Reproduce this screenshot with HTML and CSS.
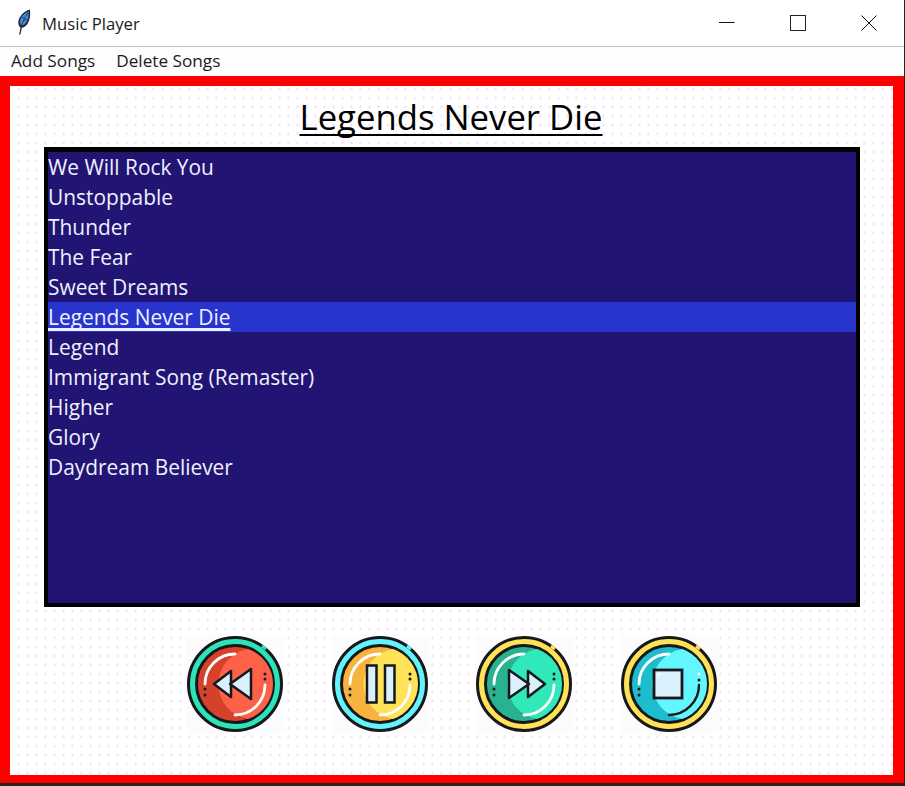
FILE: index.html
```html
<!DOCTYPE html>
<html lang="en">
<head>
    <meta charset="UTF-8">
    <title>Music Player</title>
    <link rel="stylesheet" href="styles.css">
</head>
<body>
    <div class="window">
        <div class="titlebar">
            <svg class="feather" width="16" height="26" viewBox="0 0 16 26">
                <path d="M3 25.500 C4 22 4.300 20 4.500 18.500 C2 17 1.500 12 4 8 C6 4.500 10 1.500 14 0.500 C14.500 6 14 11 11.500 15 C9.500 17.500 7.500 18.500 5.800 18.800 C5.500 21 5 23.500 4.300 25.500 Z" fill="#1a2740"/>
                <path d="M5 16.500 C3.500 14 3.800 10.500 5.800 7.500 C7.500 5.200 10 3.500 12.700 2.500 C12.800 6.500 12.200 10.500 10 13.800 C8.500 15.500 6.800 16.500 5 16.500 Z" fill="#4a90e2"/>
                <path d="M5 18 C6.500 13 8.500 8.500 12 4M7 12L11 10M6 9L8 8.500" stroke="#1a2740" stroke-width="0.800" fill="none"/>
            </svg>
            <span class="app-title">Music Player</span>
            <div class="win-buttons">
                <svg width="16" height="16" viewBox="0 0 16 16"><path d="M0 7.500H15.500" stroke="#111" fill="none"/></svg>
                <svg width="16" height="16" viewBox="0 0 16 16"><rect x="0.500" y="0.500" width="15" height="15" stroke="#222" fill="none"/></svg>
                <svg width="16" height="16" viewBox="0 0 16 16"><path d="M0.500 0.500L15.500 15.500M15.500 0.500L0.500 15.500" stroke="#111" fill="none"/></svg>
            </div>
        </div>
        <div class="menubar">
            <span class="menu-item">Add Songs</span>
            <span class="menu-item">Delete Songs</span>
        </div>
        <div class="frame">
            <h1 class="song-title">Legends Never Die</h1>
            <ul class="playlist">
                <li>We Will Rock You</li>
                <li>Unstoppable</li>
                <li>Thunder</li>
                <li>The Fear</li>
                <li>Sweet Dreams</li>
                <li class="selected">Legends Never Die</li>
                <li>Legend</li>
                <li>Immigrant Song (Remaster)</li>
                <li>Higher</li>
                <li>Glory</li>
                <li>Daydream Believer</li>
            </ul>
            <div class="controls">
                <!-- rewind -->
                <button class="control">
                    <svg width="98" height="98" viewBox="-49 -49 98 98">
                        <circle r="46.500" fill="#2fe3b9" stroke="#17171c" stroke-width="3"/>
                        <circle r="38.500" fill="#d5412b" stroke="#17171c" stroke-width="3"/>
                        <path d="M13 -35A37 37 0 0 1 13 35A35.500 35.500 0 0 1 13 -35Z" fill="#fd6249"/>
                        <path d="M0 -30A30 30 0 0 0 -30 0M30 1A30 30 0 0 1 0 31" stroke="#fff" stroke-width="2.800" fill="none" stroke-linecap="round"/>
                        <path d="M-4 -13L-21 0L-4 13Z M16 -15L-5 0L16 15Z" fill="#d9f0fd" stroke="#17171c" stroke-width="2.500" stroke-linejoin="round"/>
                        <path d="M30 -10v.1M30 -5v.1M-30 5v.1M-30 11v.1" stroke="#17171c" stroke-width="3" stroke-linecap="round"/>
                        <path d="M27 -38L31 -35" stroke="#2fe3b9" stroke-width="3"/>
                        <path d="M-29 32L-25 35" stroke="#2fe3b9" stroke-width="3"/>
                    </svg>
                </button>
                <!-- pause -->
                <button class="control">
                    <svg width="98" height="98" viewBox="-49 -49 98 98">
                        <circle r="46.500" fill="#64f3fb" stroke="#17171c" stroke-width="3"/>
                        <circle r="38.500" fill="#f8b23e" stroke="#17171c" stroke-width="3"/>
                        <path d="M13 -35A37 37 0 0 1 13 35A35.500 35.500 0 0 1 13 -35Z" fill="#fee257"/>
                        <path d="M0 -30A30 30 0 0 0 -30 0M30 1A30 30 0 0 1 0 31" stroke="#fff" stroke-width="2.800" fill="none" stroke-linecap="round"/>
                        <rect x="-13" y="-18.500" width="9.500" height="37" fill="#d9f0fd" stroke="#17171c" stroke-width="2.500"/>
                        <rect x="5" y="-18.500" width="9.500" height="37" fill="#d9f0fd" stroke="#17171c" stroke-width="2.500"/>
                        <path d="M30 -10v.1M30 -5v.1M-30 5v.1M-30 11v.1" stroke="#17171c" stroke-width="3" stroke-linecap="round"/>
                        <path d="M27 -38L31 -35" stroke="#64f3fb" stroke-width="3"/>
                        <path d="M-29 32L-25 35" stroke="#64f3fb" stroke-width="3"/>
                    </svg>
                </button>
                <!-- forward -->
                <button class="control">
                    <svg width="98" height="98" viewBox="-49 -49 98 98">
                        <circle r="46.500" fill="#fee257" stroke="#17171c" stroke-width="3"/>
                        <circle r="38.500" fill="#27b391" stroke="#17171c" stroke-width="3"/>
                        <path d="M13 -35A37 37 0 0 1 13 35A35.500 35.500 0 0 1 13 -35Z" fill="#30e8ba"/>
                        <path d="M0 -30A30 30 0 0 0 -30 0M30 1A30 30 0 0 1 0 31" stroke="#fff" stroke-width="2.800" fill="none" stroke-linecap="round"/>
                        <path d="M4 -13L21 0L4 13Z M-15 -14L5 0L-15 14Z" fill="#d9f0fd" stroke="#17171c" stroke-width="2.500" stroke-linejoin="round"/>
                        <path d="M30 -10v.1M30 -5v.1M-30 5v.1M-30 11v.1" stroke="#17171c" stroke-width="3" stroke-linecap="round"/>
                        <path d="M27 -38L31 -35" stroke="#fee257" stroke-width="3"/>
                        <path d="M-29 32L-25 35" stroke="#fee257" stroke-width="3"/>
                    </svg>
                </button>
                <!-- stop -->
                <button class="control">
                    <svg width="98" height="98" viewBox="-49 -49 98 98">
                        <circle r="46.500" fill="#fee257" stroke="#17171c" stroke-width="3"/>
                        <circle r="38.500" fill="#1dbdcd" stroke="#17171c" stroke-width="3"/>
                        <path d="M13 -35A37 37 0 0 1 13 35A35.500 35.500 0 0 1 13 -35Z" fill="#64f6ff"/>
                        <path d="M0 -30A30 30 0 0 0 -30 0" stroke="#fff" stroke-width="2.800" fill="none" stroke-linecap="round"/>
                        <path d="M30 1A30 30 0 0 1 0 31" stroke="#17171c" stroke-width="2.400" fill="none" stroke-linecap="round"/>
                        <rect x="-15" y="-14" width="28" height="28" fill="#d9f0fd" stroke="#17171c" stroke-width="2.800"/>
                        <path d="M-11 -6V-10H-7" stroke="#fff" stroke-width="1.200" fill="none"/>
                        <path d="M30 -10v.1" stroke="#fff" stroke-width="3" stroke-linecap="round"/>
                        <path d="M30 -4v.1M-30 5v.1M-30 11v.1" stroke="#17171c" stroke-width="3" stroke-linecap="round"/>
                        <path d="M27 -38L31 -35" stroke="#fee257" stroke-width="3"/>
                        <path d="M-29 32L-25 35" stroke="#fee257" stroke-width="3"/>
                    </svg>
                </button>
            </div>
        </div>
    </div>
</body>
</html>
```

FILE: styles.css
```css
body {
    margin: 0;
    background-color: #26221f;
    font-family: "Open Sans", "Noto Sans", sans-serif;
}
.window {
    width: 904px;
    height: 783px;
    display: flex;
    flex-direction: column;
    background-color: #ffffff;
}
.titlebar {
    height: 46px;
    display: flex;
    align-items: center;
    padding-left: 16px;
    border-bottom: 1px solid #bfc3cc;
    color: #1a1a1a;
}
.feather {
    margin-top: -3px;
}
.app-title {
    margin-left: 10px;
    padding-top: 1px;
    font-size: 16.700px;
}
.win-buttons {
    margin-left: auto;
    margin-right: 27px;
    display: flex;
    gap: 55px;
}
.menubar {
    height: 29px;
    display: flex;
    align-items: center;
    gap: 21px;
    padding-left: 11px;
    padding-bottom: 2px;
    box-sizing: border-box;
    background-color: #fdfdfe;
    color: #1f1a1a;
}
.menu-item {
    font-size: 17.200px;
}
.frame {
    flex: 1;
    display: flex;
    flex-direction: column;
    align-items: center;
    border-style: solid;
    border-color: #ff0000;
    border-width: 10px 11px 8px 10px;
    background-color: #ffffff;
    background-image: radial-gradient(circle, #f5dcfb 0.9px, transparent 1.5px);
    background-size: 9px 9px;
    background-position: 4px -1.500px;
    padding: 0 33px 0 34px;
}
.song-title {
    margin: 8px 2px 0 0;
    height: 53px;
    line-height: 46px;
    font-size: 34.700px;
    font-weight: 400;
    color: #000000;
    text-decoration: underline;
    text-decoration-thickness: 2px;
    text-decoration-skip-ink: none;
    text-underline-offset: 4px;
}
.playlist {
    width: 808px;
    height: 451px;
    flex: none;
    margin: 0;
    padding: 0;
    list-style: none;
    border: 4px solid #000000;
    border-top-width: 5px;
    background-color: #211472;
    color: #eef0ff;
}
.playlist li {
    height: 30px;
    line-height: 30px;
    font-size: 20.900px;
    white-space: nowrap;
}
.playlist .selected {
    background-color: #2835cc;
    text-decoration: underline;
    text-decoration-thickness: 2.500px;
    text-decoration-skip-ink: none;
    text-underline-offset: 3px;
}
.controls {
    display: flex;
    gap: 46.700px;
    margin-top: 28px;
}
.control {
    width: 98px;
    height: 98px;
    padding: 0;
    border: none;
    background-color: #fcfcff;
}
.control svg {
    display: block;
}
```
